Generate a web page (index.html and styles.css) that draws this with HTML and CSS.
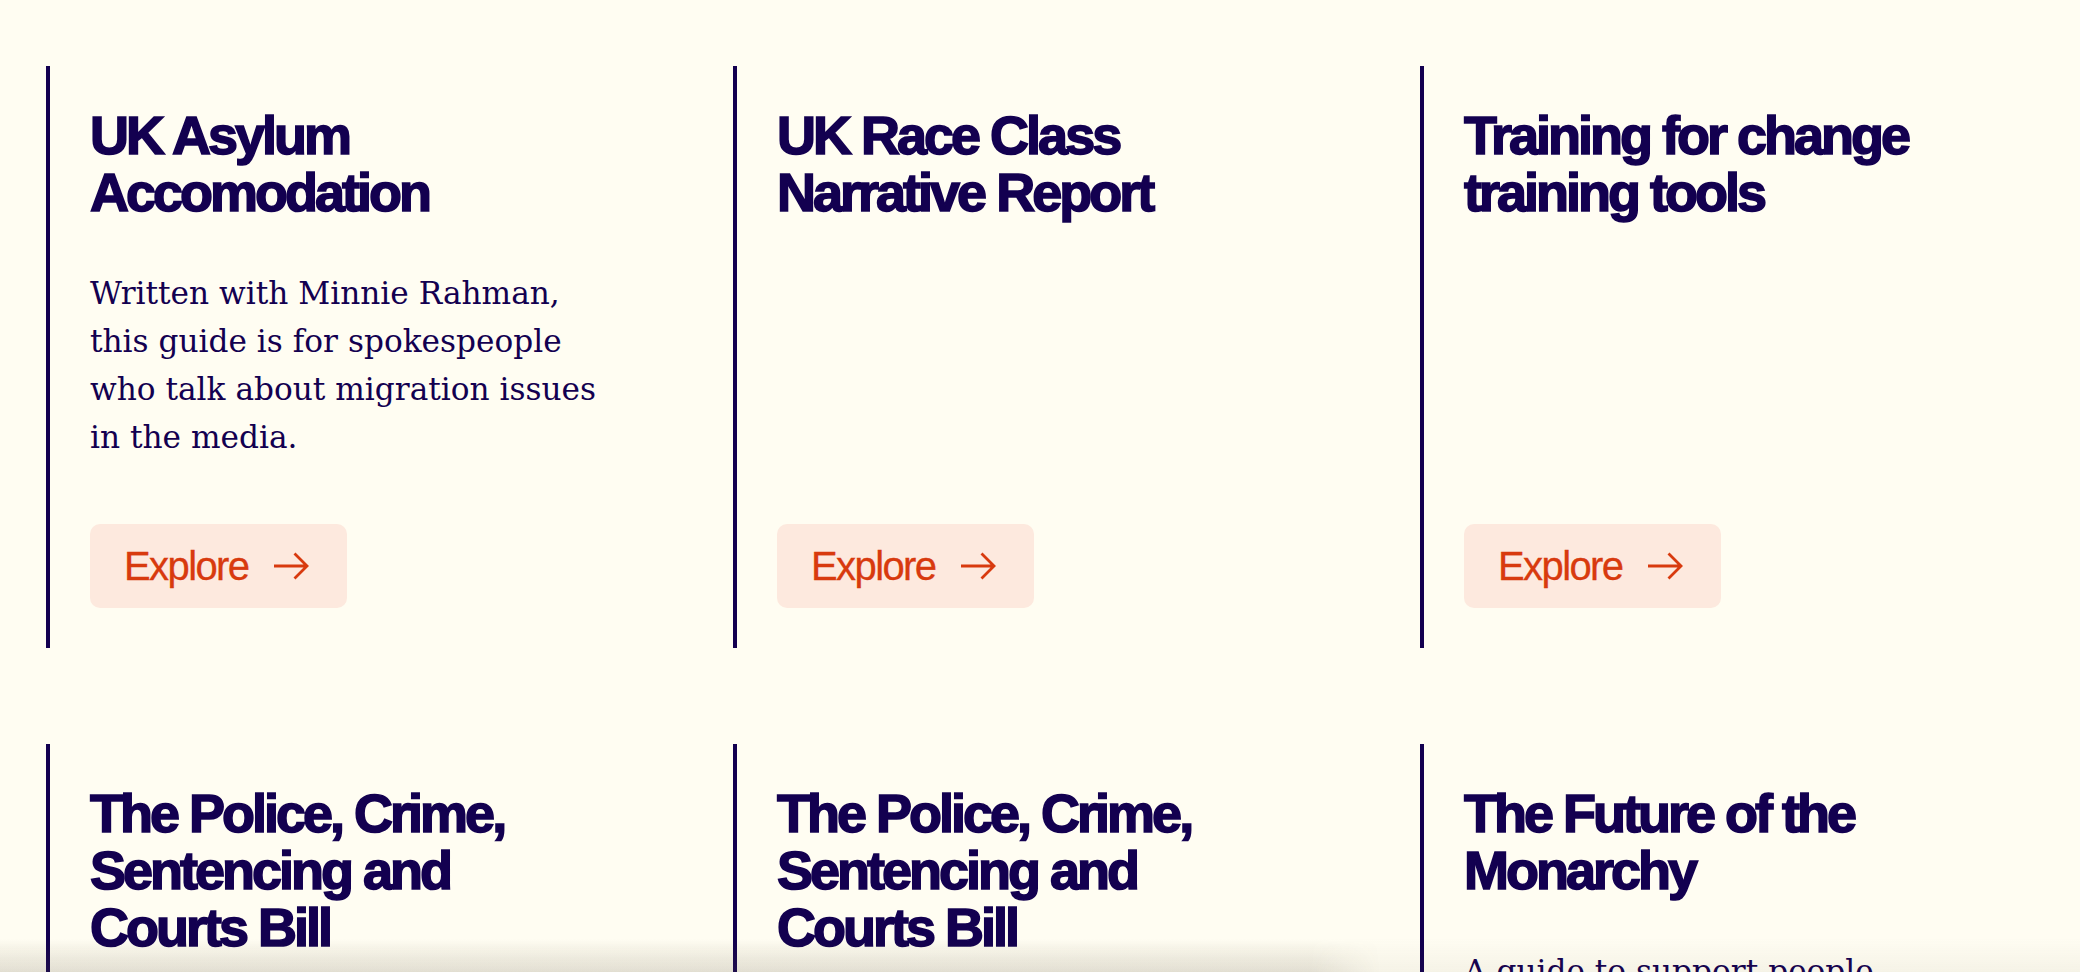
FILE: index.html
```html
<!DOCTYPE html>
<html lang="en">
<head>
<meta charset="utf-8">
<title>Guides</title>
<link rel="stylesheet" href="styles.css">
</head>
<body>
<main class="grid">
  <article class="card">
    <h2 class="card-title">UK Asylum Accomodation</h2>
    <p class="card-text">Written with Minnie Rahman, this guide is for spokespeople who talk about migration issues in the media.</p>
    <a class="btn" href="#">Explore <svg class="arrow" width="36" height="28" viewBox="0 0 36 28"><path d="M1 14H34M21.5 1.5L34 14L21.5 26.5" fill="none" stroke="currentColor" stroke-width="2.8"/></svg></a>
  </article>
  <article class="card">
    <h2 class="card-title">UK Race Class Narrative Report</h2>
    <a class="btn" href="#">Explore <svg class="arrow" width="36" height="28" viewBox="0 0 36 28"><path d="M1 14H34M21.5 1.5L34 14L21.5 26.5" fill="none" stroke="currentColor" stroke-width="2.8"/></svg></a>
  </article>
  <article class="card">
    <h2 class="card-title">Training for change training tools</h2>
    <a class="btn" href="#">Explore <svg class="arrow" width="36" height="28" viewBox="0 0 36 28"><path d="M1 14H34M21.5 1.5L34 14L21.5 26.5" fill="none" stroke="currentColor" stroke-width="2.8"/></svg></a>
  </article>
  <article class="card">
    <h2 class="card-title">The Police, Crime, Sentencing and Courts Bill</h2>
    <a class="btn" href="#">Explore <svg class="arrow" width="36" height="28" viewBox="0 0 36 28"><path d="M1 14H34M21.5 1.5L34 14L21.5 26.5" fill="none" stroke="currentColor" stroke-width="2.8"/></svg></a>
  </article>
  <article class="card">
    <h2 class="card-title">The Police, Crime, Sentencing and Courts Bill</h2>
    <a class="btn" href="#">Explore <svg class="arrow" width="36" height="28" viewBox="0 0 36 28"><path d="M1 14H34M21.5 1.5L34 14L21.5 26.5" fill="none" stroke="currentColor" stroke-width="2.8"/></svg></a>
  </article>
  <article class="card">
    <h2 class="card-title">The Future of the Monarchy</h2>
    <p class="card-text">A guide to support people talking about the future of the monarchy.</p>
    <a class="btn" href="#">Explore <svg class="arrow" width="36" height="28" viewBox="0 0 36 28"><path d="M1 14H34M21.5 1.5L34 14L21.5 26.5" fill="none" stroke="currentColor" stroke-width="2.8"/></svg></a>
  </article>
</main>
<div class="shade"></div>
</body>
</html>
```

FILE: styles.css
```css
html, body {
  margin: 0;
  padding: 0;
  overflow: hidden;
  background: #fffdf2;
}

body {
  color: #130050;
  font-family: "Liberation Sans", Arial, sans-serif;
}

.grid {
  display: grid;
  grid-template-columns: repeat(3, 1fr);
  column-gap: 73px;
  row-gap: 96px;
  padding: 66px 46px 0 46px;
}

.card {
  display: flex;
  flex-direction: column;
  align-items: flex-start;
  border-left: 4px solid #130050;
  padding: 41px 40px 40px 40px;
}

.card-title {
  margin: 0 0 63px 0;
  max-width: 495px;
  font-family: "Liberation Sans", Arial, sans-serif;
  font-weight: 700;
  font-size: 54px;
  line-height: 57px;
  letter-spacing: -3px;
  -webkit-text-stroke: 1.6px #130050;
  color: #130050;
}

.card-title + .card-text {
  margin-top: -15px;
}

.card-text {
  margin: 0 0 63px 0;
  max-width: 525px;
  font-family: "DejaVu Serif", "Liberation Serif", serif;
  font-size: 31.2px;
  line-height: 48px;
  color: #130050;
}

.btn {
  margin-top: auto;
  display: inline-flex;
  align-items: center;
  gap: 25px;
  height: 84px;
  box-sizing: border-box;
  padding: 0 38px 0 34px;
  border-radius: 10px;
  background: #fde9de;
  color: #d83a0e;
  font-family: "Liberation Sans", Arial, sans-serif;
  font-size: 40px;
  letter-spacing: -1.6px;
  -webkit-text-stroke: 0.3px #d83a0e;
  text-decoration: none;
}

.arrow {
  display: block;
  flex: none;
}

.shade {
  position: fixed;
  left: 0;
  right: 0;
  bottom: 0;
  height: 34px;
  pointer-events: none;
  background: linear-gradient(to bottom, rgba(90, 80, 60, 0), rgba(90, 80, 60, 0.06));
}

.shade::before {
  content: "";
  position: absolute;
  left: 0;
  bottom: 0;
  width: 1380px;
  height: 34px;
  background: linear-gradient(to bottom, rgba(90, 80, 60, 0), rgba(90, 80, 60, 0.12));
  -webkit-mask-image: linear-gradient(to right, #000 95%, transparent);
  mask-image: linear-gradient(to right, #000 95%, transparent);
}
```
